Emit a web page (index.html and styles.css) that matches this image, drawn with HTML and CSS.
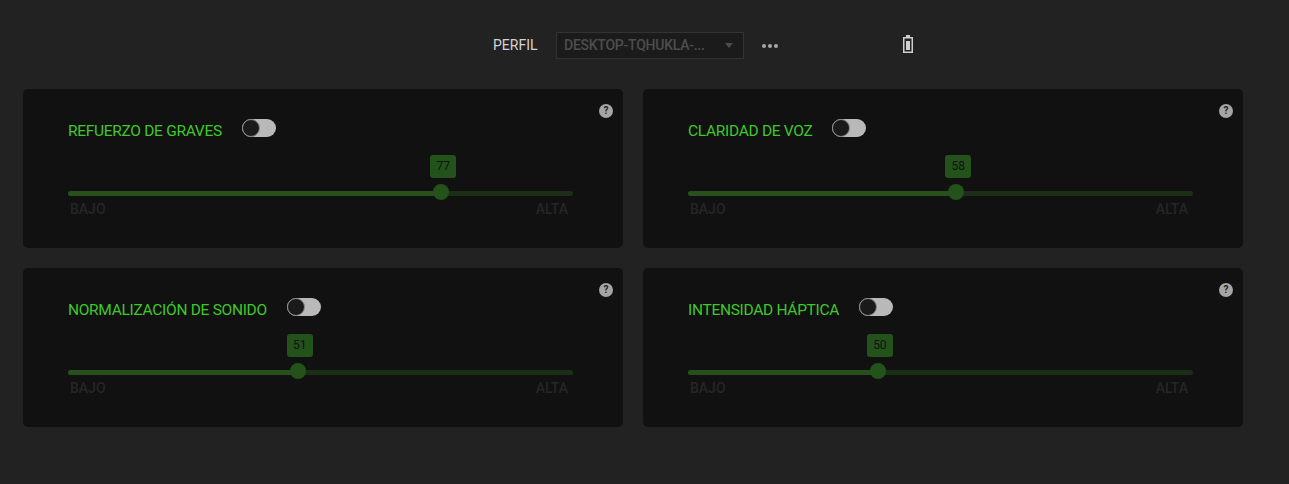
FILE: index.html
```html
<!DOCTYPE html>
<html lang="es">
<head>
    <meta charset="UTF-8">
    <title>Audio</title>
    <link rel="stylesheet" href="styles.css">
</head>
<body>
    <div class="top-bar">
        <span class="profile-label">PERFIL</span>
        <div class="profile-select">
            <span class="profile-name">DESKTOP-TQHUKLA-...</span>
            <span class="caret"></span>
        </div>
        <div class="more"><span></span><span></span><span></span></div>
        <svg class="battery" width="10" height="18" viewBox="0 0 10 18">
            <path d="M3 0h4v2h3v16H0V2h3z" fill="#cfcfcf"/>
            <rect x="1.5" y="3.5" width="7" height="13" fill="#222"/>
            <rect x="3" y="6" width="4" height="9" fill="#cfcfcf"/>
        </svg>
    </div>

    <div class="cards">
        <div class="card">
            <span class="help">?</span>
            <div class="card-head">
                <span class="card-title">REFUERZO DE GRAVES</span>
                <span class="toggle"><span class="knob"></span></span>
            </div>
            <div class="slider">
                <div class="track">
                    <div class="fill" style="width: 73.9%"></div>
                    <div class="bubble" style="left: 73.9%">77</div>
                    <div class="thumb" style="left: 73.9%"></div>
                </div>
                <div class="scale"><span>BAJO</span><span>ALTA</span></div>
            </div>
        </div>

        <div class="card">
            <span class="help">?</span>
            <div class="card-head">
                <span class="card-title">CLARIDAD DE VOZ</span>
                <span class="toggle"><span class="knob"></span></span>
            </div>
            <div class="slider">
                <div class="track">
                    <div class="fill" style="width: 53.1%"></div>
                    <div class="bubble" style="left: 53.1%">58</div>
                    <div class="thumb" style="left: 53.1%"></div>
                </div>
                <div class="scale"><span>BAJO</span><span>ALTA</span></div>
            </div>
        </div>

        <div class="card">
            <span class="help">?</span>
            <div class="card-head">
                <span class="card-title">NORMALIZACIÓN DE SONIDO</span>
                <span class="toggle"><span class="knob"></span></span>
            </div>
            <div class="slider">
                <div class="track">
                    <div class="fill" style="width: 45.5%"></div>
                    <div class="bubble" style="left: 45.5%">51</div>
                    <div class="thumb" style="left: 45.5%"></div>
                </div>
                <div class="scale"><span>BAJO</span><span>ALTA</span></div>
            </div>
        </div>

        <div class="card">
            <span class="help">?</span>
            <div class="card-head">
                <span class="card-title">INTENSIDAD HÁPTICA</span>
                <span class="toggle"><span class="knob"></span></span>
            </div>
            <div class="slider">
                <div class="track">
                    <div class="fill" style="width: 37.6%"></div>
                    <div class="bubble" style="left: 37.6%">50</div>
                    <div class="thumb" style="left: 37.6%"></div>
                </div>
                <div class="scale"><span>BAJO</span><span>ALTA</span></div>
            </div>
        </div>
    </div>
</body>
</html>
```

FILE: styles.css
```css
html, body {
    height: 100%;
}
body {
    margin: 0;
    background-color: #222222;
    font-family: Roboto, "Liberation Sans", sans-serif;
    overflow: hidden;
}
.top-bar {
    display: flex;
    align-items: center;
    height: 89px;
    padding-left: 493px;
    box-sizing: border-box;
}
.profile-label {
    width: 63px;
    font-size: 14px;
    color: #d4d4d4;
}
.profile-select {
    display: flex;
    align-items: center;
    justify-content: space-between;
    width: 188px;
    height: 27px;
    margin-top: 1px;
    padding: 0 10px 0 7px;
    box-sizing: border-box;
    background-color: #1b1b1b;
    border: 1px solid #333333;
    font-size: 14px;
    font-weight: 500;
    letter-spacing: -0.25px;
    color: #4d4d4d;
}
.caret {
    width: 0;
    height: 0;
    border-left: 4px solid transparent;
    border-right: 4px solid transparent;
    border-top: 5px solid #4d4d4d;
}
.more {
    display: flex;
    gap: 2px;
    margin-left: 18px;
    margin-top: 2px;
    width: 141px;
}
.more span {
    width: 4px;
    height: 4px;
    border-radius: 50%;
    background-color: #a8a8a8;
}
.battery {
    margin-top: -1px;
}
.cards {
    display: grid;
    grid-template-columns: 600px 600px;
    grid-auto-rows: 159px;
    gap: 20px;
    padding-left: 23px;
}
.card {
    position: relative;
    padding: 31px 50px 0 45px;
    background-color: #111111;
    border-radius: 5px;
}
.help {
    position: absolute;
    top: 15px;
    right: 10px;
    width: 14px;
    height: 14px;
    border-radius: 50%;
    background-color: #a5a5a5;
    color: #222222;
    font-size: 10px;
    font-weight: 700;
    line-height: 14px;
    text-align: center;
}
.card-head {
    display: flex;
    align-items: center;
    gap: 20px;
    height: 20px;
}
.card-title {
    margin-top: 2px;
    font-size: 15.5px;
    letter-spacing: -0.3px;
    color: #3fc829;
}
.toggle {
    display: block;
    width: 34px;
    height: 18px;
    margin-top: -4px;
    box-sizing: border-box;
    border-radius: 9px;
    background-color: #b9b9b9;
}
.knob {
    display: block;
    width: 18px;
    height: 18px;
    box-sizing: border-box;
    border: 1px solid #8a8a8a;
    border-radius: 50%;
    background-color: #1a1a1a;
}
.slider {
    margin-top: 51px;
}
.track {
    position: relative;
    height: 5px;
    border-radius: 3px;
    background-color: #1a2f15;
}
.fill {
    height: 100%;
    border-radius: 3px;
    background-color: #27501d;
}
.thumb {
    position: absolute;
    top: -7px;
    width: 16px;
    height: 16px;
    margin-left: -8px;
    border-radius: 50%;
    background-color: #23531a;
}
.bubble {
    position: absolute;
    top: -36px;
    width: 26px;
    height: 23px;
    margin-left: -11px;
    border-radius: 3px;
    background-color: #23531a;
    color: #111111;
    font-size: 12px;
    line-height: 23px;
    text-align: center;
}
.scale {
    display: flex;
    justify-content: space-between;
    padding: 5px 5px 0 2px;
    font-size: 14px;
    font-weight: 500;
    color: #262626;
}
```
